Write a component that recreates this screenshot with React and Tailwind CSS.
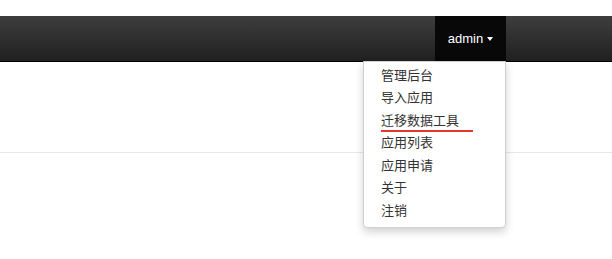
export default function App() {
  const items = ["管理后台", "导入应用", "迁移数据工具", "应用列表", "应用申请", "关于", "注销"];

  return (
    <div
      className="relative h-[259px] w-[612px] overflow-hidden bg-white"
      style={{ fontFamily: '"Liberation Sans", "Noto Sans CJK SC", sans-serif' }}
    >
      <div className="h-[16px]" />
      {/* Navbar */}
      <div className="flex h-[46px] justify-end border-b border-black bg-gradient-to-b from-[#3e3e3e] to-[#202020] pr-[106px]">
        <div className="flex w-[71px] items-center justify-center gap-[4px] bg-[#080808] text-[13px] text-white">
          <span>admin</span>
          <span className="mt-[1px] h-0 w-0 border-x-[3.5px] border-t-[4px] border-x-transparent border-t-white" />
        </div>
      </div>

      {/* Page divider */}
      <div className="mt-[90px] h-px w-full bg-[#e8e8e8]" />

      {/* Dropdown */}
      <div className="absolute left-[363px] top-[61px] w-[143px] rounded-b-[4px] border border-[#d0d0d0] bg-white pb-[5px] pt-[2px] shadow-[0_4px_8px_rgba(0,0,0,0.18)]">
        {items.map((item, idx) => (
          <div key={idx} className="relative flex h-[22.5px] items-center pl-[17px] text-[13px] text-[#333]">
            {item}
            {idx === 2 && (
              <div className="absolute left-[17px] top-[21px] h-[2px] w-[92px] bg-[#e8362f]" />
            )}
          </div>
        ))}
      </div>
    </div>
  );
}
